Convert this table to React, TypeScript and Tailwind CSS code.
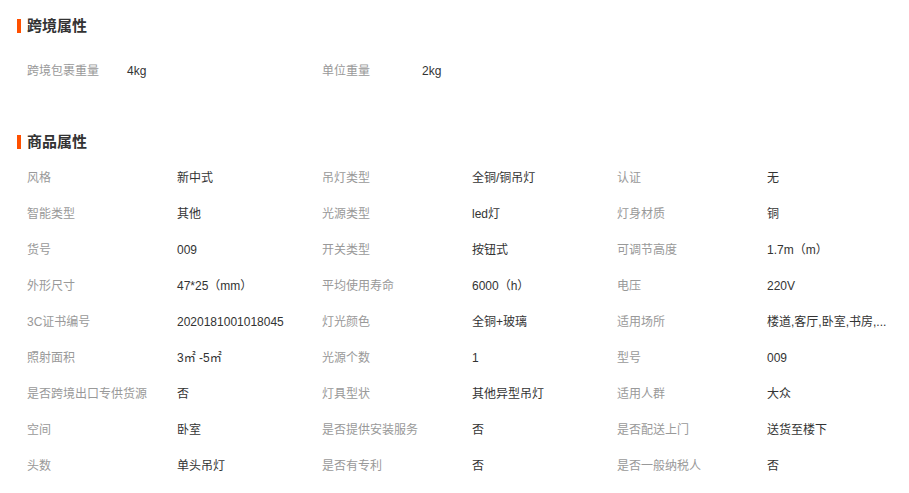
const crossBorder = [
  { label: "跨境包裹重量", value: "4kg" },
  { label: "单位重量", value: "2kg" },
]

const attrs = [
  { label: "风格", value: "新中式" },
  { label: "吊灯类型", value: "全铜/铜吊灯" },
  { label: "认证", value: "无" },
  { label: "智能类型", value: "其他" },
  { label: "光源类型", value: "led灯" },
  { label: "灯身材质", value: "铜" },
  { label: "货号", value: "009" },
  { label: "开关类型", value: "按钮式" },
  { label: "可调节高度", value: "1.7m（m）" },
  { label: "外形尺寸", value: "47*25（mm）" },
  { label: "平均使用寿命", value: "6000（h）" },
  { label: "电压", value: "220V" },
  { label: "3C证书编号", value: "2020181001018045" },
  { label: "灯光颜色", value: "全铜+玻璃" },
  { label: "适用场所", value: "楼道,客厅,卧室,书房,..." },
  { label: "照射面积", value: "3㎡ -5㎡" },
  { label: "光源个数", value: "1" },
  { label: "型号", value: "009" },
  { label: "是否跨境出口专供货源", value: "否" },
  { label: "灯具型状", value: "其他异型吊灯" },
  { label: "适用人群", value: "大众" },
  { label: "空间", value: "卧室" },
  { label: "是否提供安装服务", value: "否" },
  { label: "是否配送上门", value: "送货至楼下" },
  { label: "头数", value: "单头吊灯" },
  { label: "是否有专利", value: "否" },
  { label: "是否一般纳税人", value: "否" },
]

function SectionTitle({ title }: { title: string }) {
  return (
    <div className="flex items-center h-[20px] pl-[17px]">
      <span className="w-[4px] h-[14px] bg-[#ff5000]" />
      <span className="ml-[6px] text-[15px] font-bold text-[#333]">{title}</span>
    </div>
  )
}

export default function App() {
  return (
    <div
      className="w-[909px] h-[493px] bg-white overflow-hidden pt-[16px]"
      style={{ fontFamily: '"Liberation Sans", "Noto Sans CJK SC", sans-serif' }}
    >
      <SectionTitle title="跨境属性" />
      <div className="mt-[17px] pl-[27px] grid grid-cols-[100px_195px_100px_195px] text-[12px]">
        {crossBorder.map((item) => (
          <div key={item.label} className="contents">
            <div className="h-[36px] flex items-center text-[#999]">{item.label}</div>
            <div className="h-[36px] flex items-center text-[#333]">{item.value}</div>
          </div>
        ))}
      </div>

      <div className="mt-[43px]">
        <SectionTitle title="商品属性" />
      </div>
      <div className="mt-[8px] pl-[27px] grid grid-cols-[150px_145px_150px_145px_150px_145px] text-[12px]">
        {attrs.map((item) => (
          <div key={item.label} className="contents">
            <div className="h-[36px] flex items-center text-[#999] whitespace-nowrap">{item.label}</div>
            <div className="h-[36px] flex items-center text-[#333] whitespace-nowrap">{item.value}</div>
          </div>
        ))}
      </div>
    </div>
  )
}
